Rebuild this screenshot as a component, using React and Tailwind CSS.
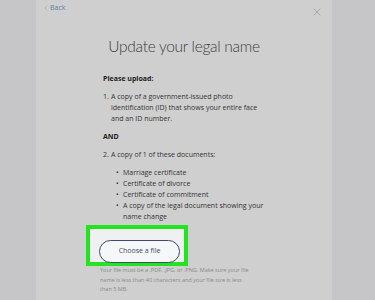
import { X, ChevronLeft } from 'lucide-react';

const docs = [
  'Marriage certificate',
  'Certificate of divorce',
  'Certificate of commitment',
];

const App = () => {
  return (
    <div className="w-[375px] h-[300px] overflow-hidden bg-[#c6c6c8] font-['Open_Sans',sans-serif]">
      <div className="ml-[36px] w-[296px] h-full bg-[#cfcfcf]">
        {/* cabecera */}
        <div className="flex justify-between items-start pl-[6px] pr-[9px] pt-[3px] h-[14px]">
          <div className="flex items-center text-[7px] text-[#5b7fa6]">
            <ChevronLeft className="w-[8px] h-[8px] text-[#9aa6b4]" strokeWidth={2} />
            <span>Back</span>
          </div>
          <X className="w-[12px] h-[12px] mt-[3px] text-[#9a9a9a]" strokeWidth={1.5} />
        </div>

        <h1 className="mt-[21px] text-center text-[15.5px] leading-[22px] tracking-[-0.3px] font-light text-[#404040] font-['Lato',sans-serif]">
          Update your legal name
        </h1>

        <div className="pl-[67px] w-[229px] mt-[16px] text-[7px] leading-[11px] text-[#333]">
          <p className="font-bold text-[#222]">Please upload:</p>

          <div className="mt-[7px] flex">
            <span className="w-[8px] shrink-0">1.</span>
            <span>
              A copy of a government-issued photo identification (ID) that shows your entire face
              and an ID number.
            </span>
          </div>

          <p className="mt-[7px] font-bold text-[#222]">AND</p>

          <div className="mt-[7px] flex">
            <span className="w-[8px] shrink-0">2.</span>
            <span>A copy of 1 of these documents:</span>
          </div>

          <ul className="mt-[7px] pl-[13px]">
            {docs.map(doc => (
              <li key={doc} className="flex">
                <span className="w-[7px] shrink-0">•</span>
                <span>{doc}</span>
              </li>
            ))}
            <li className="flex">
              <span className="w-[7px] shrink-0">•</span>
              <span>A copy of the legal document showing your name change</span>
            </li>
          </ul>
        </div>

        <div className="ml-[50px] mt-[3px] w-[102px] h-[41px] border-[4px] border-[#22e41f] bg-[#eef0f2] pl-[9px] pt-[6px]">
          <button
            type="button"
            className="w-[81px] h-[23px] rounded-full border border-[#3d4a6e] bg-[#f6f7f9] text-[7px] font-medium text-[#3d4a6e]"
          >
            Choose a file
          </button>
        </div>

        <p className="ml-[64px] whitespace-nowrap text-[5.5px] leading-[9.7px] text-[#8a8a8a]">
          Your file must be a .PDF, .JPG, or .PNG. Make sure your file
          <br />
          name is less than 40 characters and your file size is less
          <br />
          than 5 MB.
        </p>
      </div>
    </div>
  );
};

export default App;
